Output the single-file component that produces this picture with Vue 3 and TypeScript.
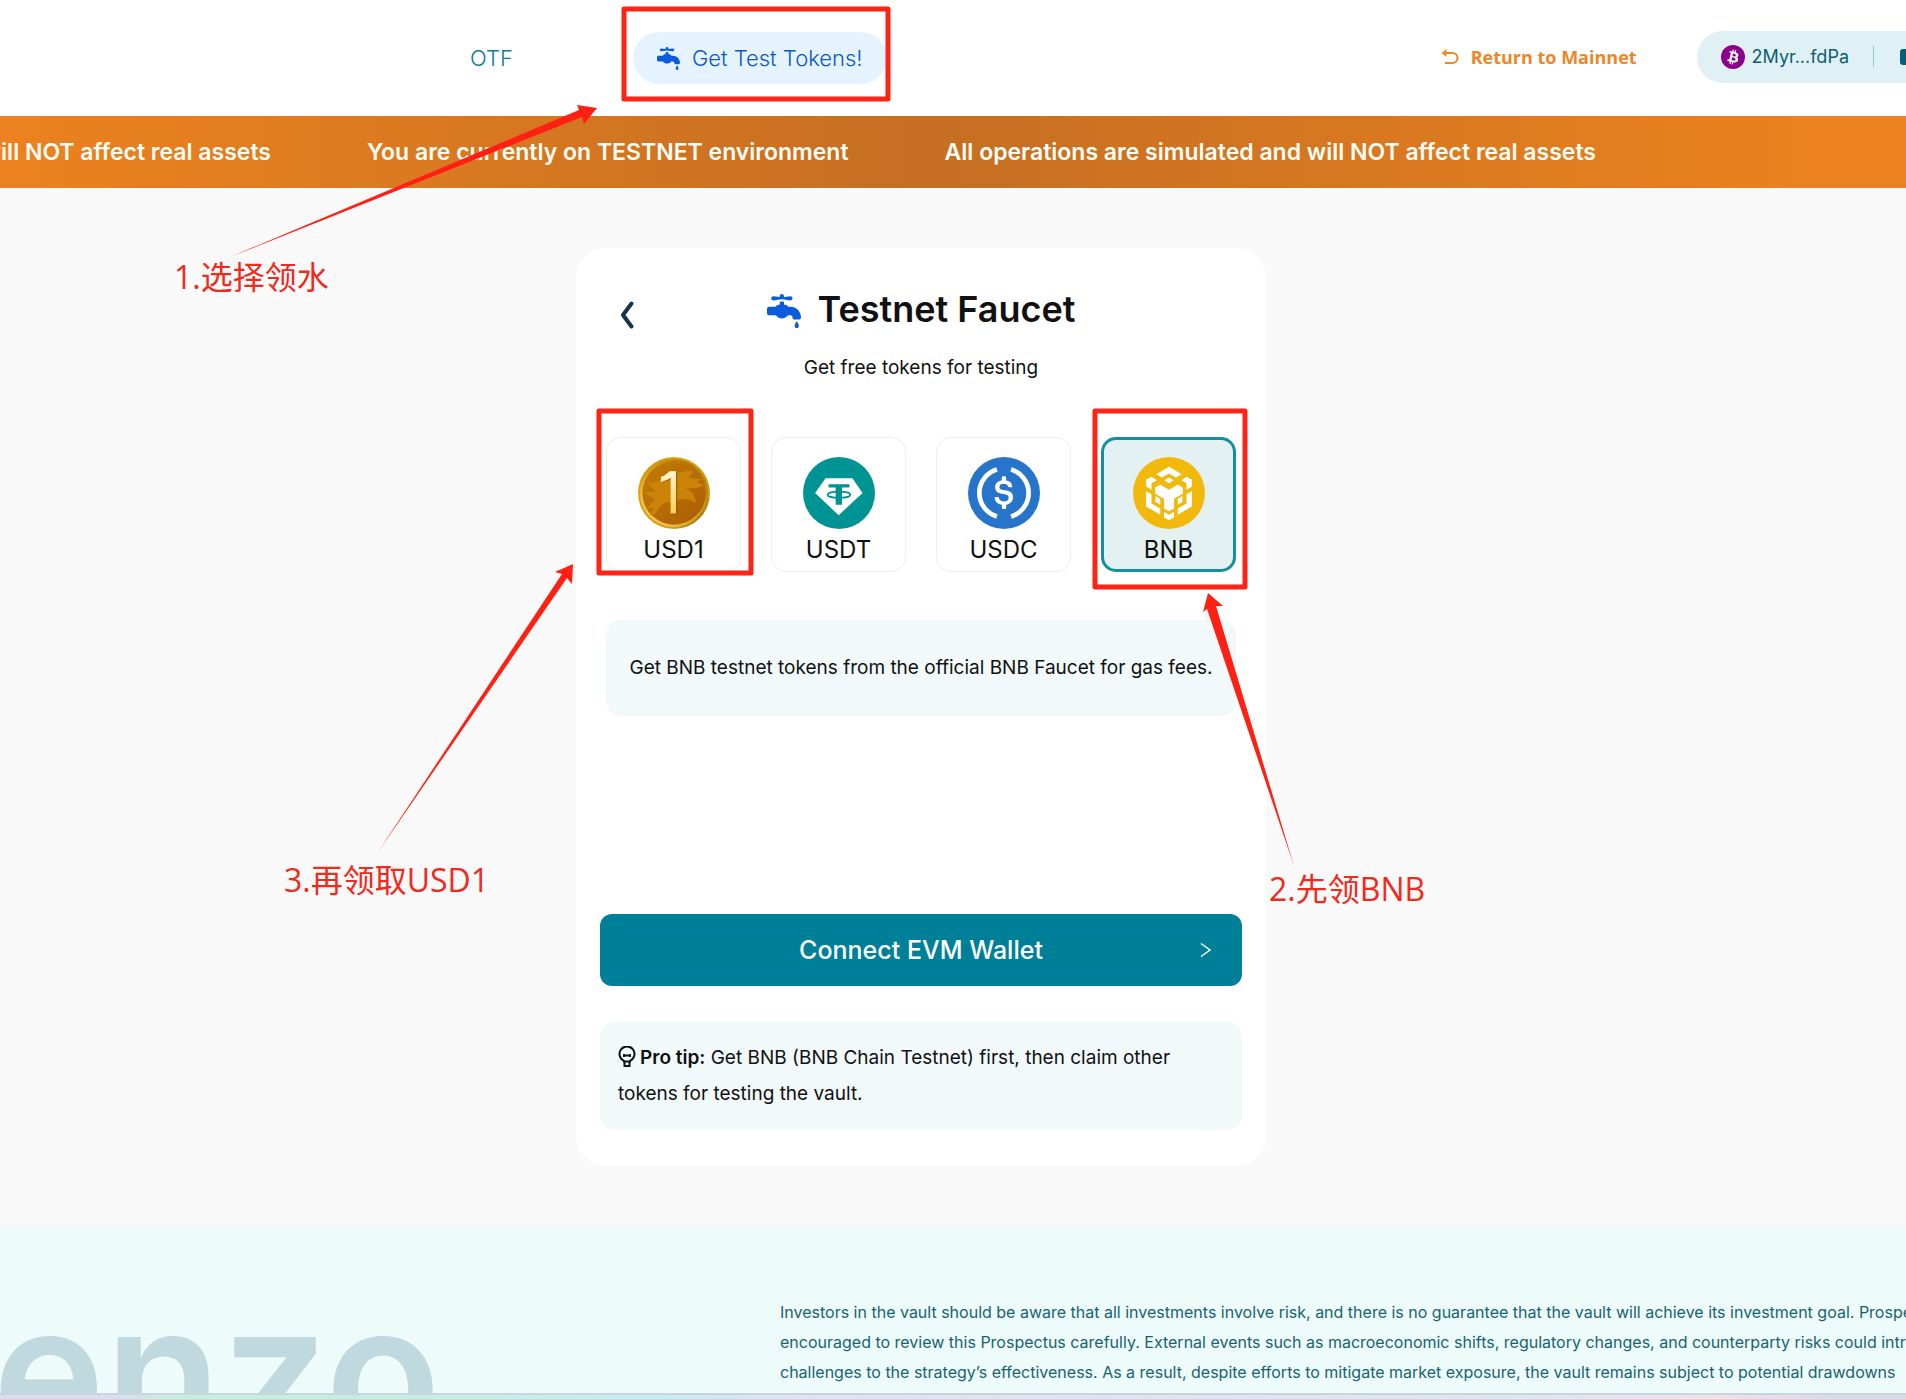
<script setup lang="ts">
import { ref } from 'vue'

type TokenId = 'USD1' | 'USDT' | 'USDC' | 'BNB'

const tokens: TokenId[] = ['USD1', 'USDT', 'USDC', 'BNB']
const selected = ref<TokenId>('BNB')

const simulated = 'All operations are simulated and will NOT affect real assets'
const notices: string[] = [simulated, 'You are currently on TESTNET environment', simulated]

const disclaimer: string[] = [
  'Investors in the vault should be aware that all investments involve risk, and there is no guarantee that the vault will achieve its investment goal. Prospective',
  'encouraged to review this Prospectus carefully. External events such as macroeconomic shifts, regulatory changes, and counterparty risks could introduce',
  'challenges to the strategy’s effectiveness. As a result, despite efforts to mitigate market exposure, the vault remains subject to potential drawdowns',
]

const faucetPath =
  'M224 0c17.7 0 32 14.3 32 32V44l96-12c17.7 0 32 14.3 32 32s-14.3 32-32 32L256 84 224 80 192 84 96 96C78.3 96 64 81.7 64 64s14.3-32 32-32l96 12V32c0-17.7 14.3-32 32-32zM0 224c0-17.7 14.3-32 32-32h96l22.6-22.6c6-6 14.1-9.4 22.6-9.4H192V116.2l32-4 32 4V160h18.7c8.5 0 16.6 3.4 22.6 9.4L320 192h32c88.4 0 160 71.6 160 160c0 17.7-14.3 32-32 32H416c-17.7 0-32-14.3-32-32s-14.3-32-32-32H315.9c-20.2 29-53.9 48-91.9 48s-71.7-19-91.9-48H32c-17.7 0-32-14.3-32-32V224zM436.8 423.4c1.9-4.5 6.3-7.4 11.2-7.4s9.2 2.9 11.2 7.4l18.2 42.4c1.8 4.1 2.7 8.6 2.7 13.1V480c0 17.7-14.3 32-32 32s-32-14.3-32-32v-1.2c0-4.5 .9-8.9 2.7-13.1l18.2-42.4z'
</script>

<template>
  <div class="page">
    <header class="topbar">
      <nav class="nav">
        <a href="#otf" class="nav-link">OTF</a>
        <a href="#faucet" class="faucet-link">
          <svg class="icon-faucet" viewBox="0 0 512 512" aria-hidden="true"><path :d="faucetPath" /></svg>
          Get Test Tokens!
        </a>
      </nav>
      <div class="account">
        <a href="#mainnet" class="mainnet">
          <svg width="18" height="16" viewBox="0 0 18 16" fill="none" stroke="currentColor" stroke-width="2" aria-hidden="true">
            <path d="M3 4H11.500a5 5 0 0 1 0 10H4" />
            <path d="M5.500 0V8L0.500 4Z" fill="currentColor" stroke="none" />
          </svg>
          Return to Mainnet
        </a>
        <button type="button" class="wallet">
          <svg width="24" height="24" viewBox="0 0 32 32" aria-hidden="true">
            <circle cx="16" cy="16" r="16" fill="#8d008d" />
            <path
              fill="#fff"
              d="M23.189 14.02c.314-2.096-1.283-3.223-3.465-3.975l.708-2.84-1.728-.43-.69 2.765c-.454-.114-.92-.22-1.385-.326l.695-2.783L15.596 6l-.708 2.839c-.376-.086-.746-.17-1.104-.26l.002-.009-2.384-.595-.46 1.846s1.283.294 1.256.312c.7.175.826.638.805 1.006l-.806 3.235c.048.012.11.03.18.057l-.183-.045-1.13 4.532c-.086.212-.303.531-.793.41.018.025-1.256-.313-1.256-.313l-.858 1.978 2.25.561c.418.105.828.215 1.231.318l-.715 2.872 1.727.43.708-2.84c.472.127.93.245 1.378.357l-.706 2.828 1.728.43.715-2.866c2.948.558 5.164.333 6.097-2.333.752-2.146-.037-3.385-1.588-4.192 1.13-.26 1.98-1.003 2.207-2.538zm-3.95 5.538c-.533 2.147-4.148.986-5.32.695l.95-3.805c1.172.293 4.929.872 4.37 3.11zm.535-5.569c-.487 1.953-3.495.96-4.47.717l.86-3.45c.975.243 4.118.696 3.61 2.733z"
            />
          </svg>
          <span class="address">2Myr...fdPa</span>
          <span class="divider"></span>
          <span class="wallet-mark"></span>
        </button>
      </div>
    </header>

    <div class="banner">
      <span v-for="(notice, i) in notices" :key="i">{{ notice }}</span>
    </div>

    <main class="main">
      <section class="card">
        <div class="card-head">
          <button type="button" class="back" aria-label="Back">
            <svg width="14" height="28" viewBox="0 0 14 28" fill="none" stroke="#17354a" stroke-width="4" stroke-linecap="round" stroke-linejoin="round">
              <path d="M11.500 2.500L3 14L11.500 25.500" />
            </svg>
          </button>
          <h1 class="title">
            <svg class="icon-faucet-large" viewBox="0 0 512 512" aria-hidden="true"><path :d="faucetPath" /></svg>
            Testnet Faucet
          </h1>
        </div>
        <p class="subtitle">Get free tokens for testing</p>

        <div class="tokens">
          <button
            v-for="token in tokens"
            :key="token"
            type="button"
            class="token"
            :class="{ active: token === selected }"
            :aria-pressed="token === selected"
            @click="selected = token"
          >
            <svg v-if="token === 'USD1'" class="coin" viewBox="0 0 214 214" aria-hidden="true">
              <defs>
                <linearGradient id="rim" x1="0" y1="0" x2="1" y2="1">
                  <stop offset="0" stop-color="#b98308" />
                  <stop offset="0.250" stop-color="#e0a30c" />
                  <stop offset="0.750" stop-color="#d79a12" />
                  <stop offset="1" stop-color="#5e4708" />
                </linearGradient>
                <linearGradient id="shine" x1="0" y1="1" x2="1" y2="0">
                  <stop offset="0" stop-color="#ffd873" />
                  <stop offset="0.450" stop-color="#dca016" />
                  <stop offset="1" stop-color="#9e7004" />
                </linearGradient>
                <linearGradient id="face" x1="0" y1="0" x2="1" y2="1">
                  <stop offset="0" stop-color="#c27c06" />
                  <stop offset="1" stop-color="#ac5d03" />
                </linearGradient>
                <linearGradient id="digit" x1="0" y1="0" x2="0" y2="1">
                  <stop offset="0" stop-color="#fff6cf" />
                  <stop offset="1" stop-color="#ffcf52" />
                </linearGradient>
              </defs>
              <circle cx="107" cy="107" r="107" fill="url(#rim)" />
              <circle cx="107" cy="107" r="101" fill="url(#shine)" />
              <circle cx="107" cy="107" r="94" fill="url(#face)" />
              <path
                d="M24 72C44 84 62 74 84 52C104 42 128 50 144 40L166 44L150 62L194 66L174 74L198 84L176 92L140 94C158 98 170 112 172 136C152 124 130 120 112 132C96 140 84 128 70 142L52 168L34 174L46 150L22 158L50 126L16 104L52 104Z"
                fill="#cf8a08"
                opacity="0.800"
              />
              <path d="M70 73V61C81 57 89 52 95 45H117V171H101V65C92 70 82 73 70 76Z" fill="#8b4d03" opacity="0.600" />
              <path d="M68 75V59C79 55 87 50 93 42H113V168H97V62C88 68 79 72 68 75Z" fill="url(#digit)" />
            </svg>

            <svg v-else-if="token === 'USDT'" class="coin" viewBox="0 0 214 214" aria-hidden="true">
              <circle cx="107" cy="107" r="107" fill="#009393" />
              <path d="M67 63H147L177 107L106 173L36 107Z" fill="#fff" />
              <path d="M76 81H138V91H116V142H97V91H76Z" fill="#009393" />
              <ellipse cx="107" cy="112" rx="34" ry="9" fill="none" stroke="#009393" stroke-width="5" />
            </svg>

            <svg v-else-if="token === 'USDC'" class="coin" viewBox="0 0 214 214" aria-hidden="true">
              <circle cx="107" cy="107" r="107" fill="#2775ca" />
              <path d="M86 37A73 73 0 0 0 86 177M128 37A73 73 0 0 1 128 177" fill="none" stroke="#fff" stroke-width="14" />
              <g transform="translate(0 -1) scale(6.688)">
                <path
                  fill="#fff"
                  d="M20.022 18.124c0-2.124-1.280-2.852-3.840-3.156-1.828-.243-2.193-.728-2.193-1.578 0-.850.610-1.396 1.828-1.396 1.097 0 1.707.364 2.011 1.275a.458.458 0 0 0 .427.303h.975a.416.416 0 0 0 .427-.425v-.060a3.040 3.040 0 0 0-2.743-2.489V9.142c0-.243-.183-.425-.487-.486h-.915c-.243 0-.426.182-.487.486v1.396c-1.829.242-2.986 1.456-2.986 2.974 0 2.002 1.218 2.791 3.778 3.095 1.707.303 2.255.668 2.255 1.639 0 .970-.853 1.638-2.011 1.638-1.585 0-2.133-.667-2.316-1.578-.060-.242-.244-.364-.427-.364h-1.036a.416.416 0 0 0-.426.425v.060c.243 1.518 1.219 2.610 3.230 2.914v1.457c0 .242.183.425.487.485h.915c.243 0 .426-.182.487-.485V21.340c1.829-.303 3.047-1.578 3.047-3.217z"
                />
              </g>
            </svg>

            <svg v-else class="coin" viewBox="0 0 214 214" aria-hidden="true">
              <circle cx="107" cy="107" r="107" fill="#f0b90b" />
              <g fill="#fff">
                <path d="M107 29L145 51L128 61L107 49L86 61L69 51Z" />
                <path d="M107 61L121 69L107 78L93 69Z" />
                <path d="M39 67L55 59L71 69L55 78V97L39 88Z" />
                <path d="M175 67L159 59L143 69L159 78V97L175 88Z" />
                <path d="M66 91L81 82L107 97L133 82L148 91V109L122 124V153L107 161L92 153V124L66 109Z" />
                <path d="M67 116L81 124V142L67 134Z" />
                <path d="M147 116L133 124V142L147 134Z" />
                <path d="M39 101L55 111V138L81 153V172L39 147Z" />
                <path d="M175 101L159 111V138L133 153V172L175 147Z" />
                <path d="M92 163L107 172L122 163V180L107 188L92 180Z" />
              </g>
            </svg>
            <span class="token-name">{{ token }}</span>
          </button>
        </div>

        <div class="details">
          <p class="info">Get BNB testnet tokens from the official BNB Faucet for gas fees.</p>
        </div>

        <button type="button" class="connect">
          <span class="connect-label">Connect EVM Wallet</span>
          <svg width="12" height="16" viewBox="0 0 12 16" fill="none" stroke="currentColor" stroke-width="1.500" aria-hidden="true">
            <path d="M1 1.500L10 8L1 14.500" />
          </svg>
        </button>

        <p class="tip">
          <svg class="bulb" width="18" height="22" viewBox="0 0 18 22" fill="none" stroke="#111" stroke-width="2" aria-hidden="true">
            <path d="M6 15.500V14.800A7.500 7.500 0 1 1 12 14.800V15.500Z" />
            <path d="M6.500 16V20H11.500V16M6 8V11M12 8V11M6 9.500H12" />
          </svg>
          <strong>Pro tip:</strong> Get BNB (BNB Chain Testnet) first, then claim other tokens for testing the vault.
        </p>
      </section>
    </main>

    <footer class="footer">
      <div class="wordmark"><span>lorenzo</span></div>
      <p class="disclaimer">
        <span v-for="line in disclaimer" :key="line">{{ line }}</span>
      </p>
    </footer>
    <div class="strip"></div>

    <!-- Walkthrough notes drawn over the page -->
    <div class="notes">
      <svg width="100%" height="100%" fill="none">
        <g stroke="#fb2415" stroke-width="5" stroke-linejoin="round">
          <rect x="624" y="9" width="264" height="90" />
          <rect x="599" y="411" width="152" height="162" />
          <rect x="1095" y="411" width="150" height="176" />
        </g>
        <g fill="#ff2014">
          <path d="M230 257L579 110L577 105L597 108L584 124L582 117Z" />
          <path d="M378 852L562 574L555 572L573 564L572 584L567 578Z" />
          <path d="M1294 866L1207 609L1203 612L1208 593L1223 606L1216 606Z" />
        </g>
      </svg>
      <span class="note note-one">1.选择领水</span>
      <span class="note note-two">2.先领BNB</span>
      <span class="note note-three">3.再领取USD1</span>
    </div>
  </div>
</template>

<style>
body {
  margin: 0;
  background: #f9f9f9;
}
</style>

<style scoped>
.page {
  position: relative;
  overflow: hidden;
  font-family: Inter, "Noto Sans CJK SC", sans-serif;
  color: #111;
  background: #f9f9f9;
}

button {
  font: inherit;
  color: inherit;
  border: 0;
  padding: 0;
  margin: 0;
  background: none;
  cursor: pointer;
}

a {
  text-decoration: none;
}

h1,
p {
  margin: 0;
}

svg {
  flex: none;
}

.topbar {
  display: flex;
  align-items: center;
  justify-content: space-between;
  height: 116px;
  background: #fff;
}

.nav {
  display: flex;
  align-items: center;
  gap: 120px;
  padding-left: 470px;
  font-size: 22px;
  font-weight: 300;
}

.nav-link {
  color: #0b7d8c;
}

.faucet-link {
  display: flex;
  align-items: center;
  gap: 12px;
  height: 52px;
  padding: 0 24px;
  border-radius: 26px;
  background: #e5f3ff;
  color: #0b58c8;
}

.icon-faucet {
  width: 23px;
  height: 23px;
  fill: #0b5bdc;
}

.account {
  display: flex;
  align-items: center;
  gap: 60px;
  padding-bottom: 3px;
}

.mainnet {
  display: flex;
  align-items: center;
  gap: 12px;
  font-family: "Open Sans", "Noto Sans", sans-serif;
  font-size: 18px;
  font-weight: 700;
  color: #ee8625;
}

.wallet {
  display: flex;
  align-items: center;
  height: 52px;
  padding-left: 24px;
  border-radius: 26px 0 0 26px;
  background: #e0f1f6;
  color: #0a5f70;
}

.address {
  padding: 0 24px 0 7px;
  font-size: 18px;
}

.divider {
  width: 1px;
  height: 21px;
  margin-right: 26px;
  background: #8cc9d4;
}

.wallet-mark {
  width: 6px;
  height: 16px;
  border-radius: 3px 0 0 3px;
  background: #006078;
}

.banner {
  display: flex;
  align-items: center;
  justify-content: flex-end;
  gap: 96px;
  height: 72px;
  padding-right: 310px;
  background: linear-gradient(90deg, #ec821f 0%, #c66f22 48%, #c66f22 50%, #ec821f 96%);
  color: #fffdf5;
  font-size: 23px;
  font-weight: 600;
  white-space: nowrap;
}

.main {
  display: flex;
  justify-content: center;
  padding: 60px 64px 60px 0;
}

.card {
  box-sizing: border-box;
  width: 690px;
  padding: 36px 24px;
  border-radius: 30px;
  background: #fff;
}

.card-head {
  display: grid;
  grid-template-columns: 1fr auto 1fr;
  align-items: center;
  height: 50px;
  padding: 0 20px;
}

.back {
  display: flex;
  justify-self: start;
  padding-top: 12px;
}

.title {
  display: flex;
  align-items: center;
  gap: 17px;
  font-size: 36px;
  font-weight: 600;
  line-height: 50px;
}

.icon-faucet-large {
  width: 34px;
  height: 34px;
  padding-top: 3px;
  fill: #0b5bdc;
}

.subtitle {
  margin-top: 19px;
  font-size: 19px;
  font-weight: 400;
  line-height: 30px;
  text-align: center;
}

.tokens {
  display: grid;
  grid-template-columns: repeat(4, 1fr);
  gap: 30px;
  padding: 0 6px;
  margin-top: 54px;
}

.token {
  display: flex;
  flex-direction: column;
  align-items: center;
  height: 135px;
  padding-top: 19px;
  border: 1px solid #eee;
  border-radius: 15px;
  background: #fff;
}

.token.active {
  padding-top: 17px;
  border: 3px solid #148f9f;
  background: #e4f1f2;
}

.coin {
  width: 72px;
  height: 72px;
}

.token-name {
  margin-top: 6px;
  font-size: 24px;
  line-height: 30px;
}

.details {
  min-height: 294px;
  margin-top: 48px;
  padding: 0 6px;
}

.info {
  padding: 33px 0;
  border-radius: 15px;
  background: #f1f9fb;
  font-size: 19px;
  font-weight: 400;
  line-height: 30px;
  text-align: center;
}

.connect {
  display: grid;
  grid-template-columns: 1fr auto 1fr;
  align-items: center;
  width: 100%;
  height: 72px;
  padding: 0 30px;
  border-radius: 12px;
  background: #007f98;
  color: #fff;
}

.connect-label {
  grid-column: 2;
  font-size: 25px;
  font-weight: 500;
}

.connect svg {
  justify-self: end;
}

.tip {
  margin-top: 36px;
  padding: 18px;
  border-radius: 15px;
  background: #f1f9fb;
  font-size: 19px;
  font-weight: 400;
  line-height: 36px;
}

.tip strong {
  font-weight: 600;
}

.bulb {
  margin-right: 4px;
  vertical-align: -4px;
}

.footer {
  display: grid;
  grid-template-columns: 441px minmax(0, 1fr);
  column-gap: 339px;
  padding: 71px 0 0;
  background: #eefbfb;
}

.wordmark {
  display: flex;
  justify-content: flex-end;
  align-self: end;
  height: 96px;
  overflow: hidden;
  color: #bfd9de;
  font-size: 190px;
  font-weight: 600;
  line-height: 150px;
}

.disclaimer {
  color: #17636f;
  font-size: 16px;
  font-weight: 400;
  line-height: 30px;
  white-space: nowrap;
  padding-bottom: 6px;
}

.disclaimer span {
  display: block;
}

.strip {
  height: 4px;
  border-top: 2px solid #c8d4de;
  background: linear-gradient(90deg, #dcdced 0, #dcdced 6%, #c5eedb 9%, #c5eee3 26%, #c3edf2 34%, #e3e1f2 42%, #dfe5f1 80%, #f2e1e6 90%, #dcdae9 96%);
}

.notes {
  position: absolute;
  inset: 0;
  pointer-events: none;
}

.note {
  position: absolute;
  color: #f02a1c;
  font-family: "Open Sans", "Noto Sans CJK SC", sans-serif;
  font-size: 32px;
  line-height: 44px;
  white-space: nowrap;
}

.note-one {
  left: 174px;
  top: 255px;
}

.note-two {
  left: 1269px;
  top: 867px;
}

.note-three {
  left: 284px;
  top: 858px;
}
</style>
